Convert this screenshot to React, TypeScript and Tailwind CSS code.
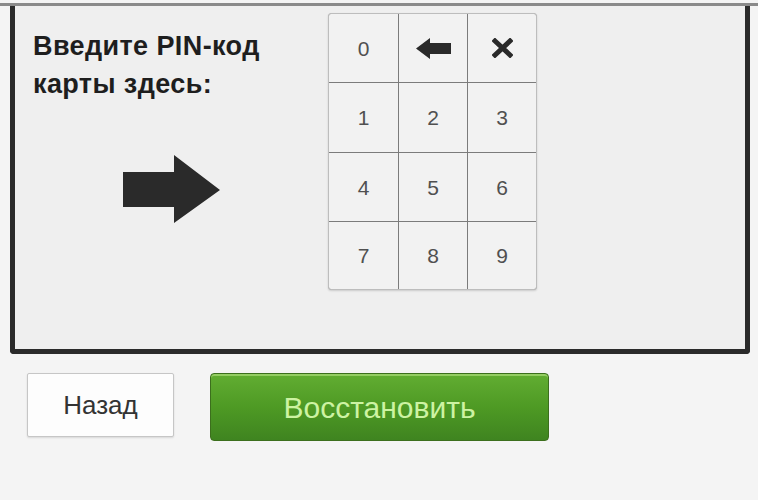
import React from 'react';

const keys = ['0', 'back', 'clear', '1', '2', '3', '4', '5', '6', '7', '8', '9'];

const KeyGlyph: React.FC<{ k: string }> = ({ k }) => {
    if (k === 'back') {
        return (
            <svg width="35" height="21" viewBox="0 0 35 21">
                <polygon points="0,10.5 14,0 14,5 35,5 35,16 14,16 14,21" fill="#2a2a2a" />
            </svg>
        );
    }
    if (k === 'clear') {
        return (
            <svg width="21" height="20" viewBox="0 0 21 20">
                <path d="M3 3 L18 17 M18 3 L3 17" stroke="#2a2a2a" strokeWidth="5" strokeLinecap="square" />
            </svg>
        );
    }
    return <span className="text-[21px] leading-none text-[#505050]">{k}</span>;
};

export default function App() {
    return (
        <div className="w-[758px] h-[500px] bg-[#f4f4f4] overflow-hidden pt-[3px]" style={{ fontFamily: '"Liberation Sans", Arial, sans-serif' }}>
            {/* top edge */}
            <div className="h-[3px] bg-[#8a8a8a]" />

            {/* terminal frame */}
            <div className="ml-[10px] w-[740px] h-[348px] bg-[#efefef] border-x-[5px] border-b-[5px] border-[#2b2b2b] rounded-b-[4px] flex items-start">
                <div className="w-[313px] pl-[18px] pt-[21px]">
                    <p className="text-[27px] leading-[38px] tracking-[0.4px] font-bold text-[#1e1e1e]">
                        Введите PIN-код
                        <br />
                        карты здесь:
                    </p>
                    <svg className="ml-[90px] mt-[52px]" width="97" height="68" viewBox="0 0 97 68">
                        <polygon points="0,17 51,17 51,0 97,35 51,68 51,52 0,52" fill="#2a2a2a" />
                    </svg>
                </div>

                {/* keypad */}
                <div className="mt-[7px] border border-[#bdbdbd] rounded-[3px] shadow-[0_1px_2px_rgba(0,0,0,0.15)] bg-[#7c7c7c] grid grid-cols-[69px_68px_68px] grid-rows-[68px_69px_68px_67px] gap-px overflow-hidden">
                    {keys.map(k => (
                        <div key={k} className="bg-[#f2f2f2] flex items-center justify-center">
                            <KeyGlyph k={k} />
                        </div>
                    ))}
                </div>
            </div>

            {/* actions */}
            <div className="flex items-start mt-[19px] pl-[27px] gap-[36px]">
                <button className="w-[147px] h-[64px] bg-[#fdfdfd] border border-[#c6c6c6] rounded-[2px] shadow-[0_1px_2px_rgba(0,0,0,0.12)] text-[26px] text-[#333]">
                    Назад
                </button>
                <button className="w-[339px] h-[68px] rounded-[4px] border border-[#3c6f1d] bg-gradient-to-b from-[#62ad32] via-[#4e9a24] to-[#3f8420] shadow-[inset_0_2px_0_rgba(170,220,120,0.7)] text-[30px] text-[#cdf3a2]">
                    Восстановить
                </button>
            </div>
        </div>
    );
}
